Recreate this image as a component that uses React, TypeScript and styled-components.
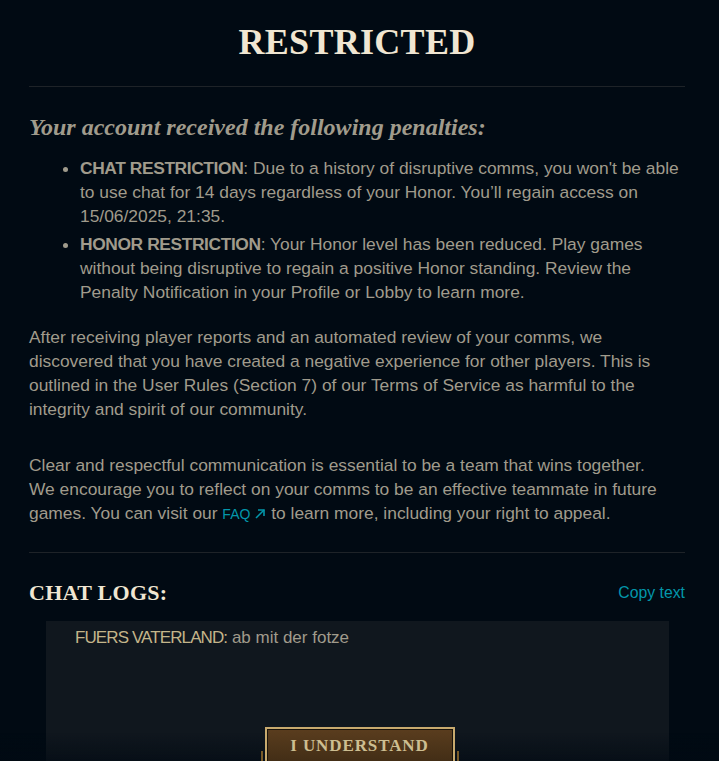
import React from 'react';
import styled, { createGlobalStyle } from 'styled-components';

const GlobalStyle = createGlobalStyle`
  html, body {
    margin: 0;
    padding: 0;
    background: #010a13;
  }
  body {
    font-family: 'Liberation Sans', Arial, sans-serif;
    color: #a09b8c;
  }
`;

const App: React.FC = () => {
  return (
    <>
      <GlobalStyle />
      <Page>
        <Title>RESTRICTED</Title>
        <Divider />
        <Subheading>Your account received the following penalties:</Subheading>
        <PenaltyList>
          <li>
            <Label>CHAT RESTRICTION</Label>: Due to a history of disruptive comms, you won't be able
            <br />
            to use chat for 14 days regardless of your Honor. You’ll regain access on
            <br />
            15/06/2025, 21:35.
          </li>
          <li>
            <Label>HONOR RESTRICTION</Label>: Your Honor level has been reduced. Play games
            <br />
            without being disruptive to regain a positive Honor standing. Review the
            <br />
            Penalty Notification in your Profile or Lobby to learn more.
          </li>
        </PenaltyList>
        <Paragraph>
          After receiving player reports and an automated review of your comms, we
          <br />
          discovered that you have created a negative experience for other players. This is
          <br />
          outlined in the User Rules (Section 7) of our Terms of Service as harmful to the
          <br />
          integrity and spirit of our community.
        </Paragraph>
        <Paragraph>
          Clear and respectful communication is essential to be a team that wins together.
          <br />
          We encourage you to reflect on your comms to be an effective teammate in future
          <br />
          games. You can visit our{' '}
          <FaqLink href="#">
            FAQ
            <svg width="12" height="12" viewBox="0 0 12 12" fill="none" stroke="currentColor" strokeWidth="1.6">
              <path d="M2 10 L10 2" />
              <path d="M4 2 H10 V8" />
            </svg>
          </FaqLink>{' '}
          to learn more, including your right to appeal.
        </Paragraph>
        <Divider />
        <LogsHeader>
          <LogsTitle>CHAT LOGS:</LogsTitle>
          <CopyButton>Copy text</CopyButton>
        </LogsHeader>
        <ChatBox>
          <ChatLine>
            <Sender>FUERS VATERLAND:</Sender> ab mit der fotze
          </ChatLine>
        </ChatBox>
      </Page>
      <Footer>
        <UnderstandButton>I UNDERSTAND</UnderstandButton>
      </Footer>
    </>
  );
};

const Page = styled.main`
  padding: 20px 34px 0 29px;
  font-size: 17.4px;
  line-height: 24px;
`;

const Title = styled.h1`
  margin: 0 0 22px;
  font-family: 'Liberation Serif', 'Times New Roman', serif;
  font-weight: bold;
  font-size: 36px;
  line-height: 44px;
  text-align: center;
  color: #f0e6d2;
  letter-spacing: 0.3px;
`;

const Divider = styled.hr`
  margin: 0;
  border: none;
  height: 1px;
  background: #1e2328;
`;

const Subheading = styled.h2`
  margin: 26px 0 15px;
  font-family: 'Liberation Serif', 'Times New Roman', serif;
  font-style: italic;
  font-weight: bold;
  font-size: 24px;
  line-height: 28px;
  color: #a09b8c;
`;

const PenaltyList = styled.ul`
  margin: 0 0 21px;
  padding-left: 51px;

  li {
    white-space: nowrap;
  }
  li + li {
    margin-top: 4px;
  }
`;

const Label = styled.strong`
  font-weight: bold;
  letter-spacing: -0.4px;
`;

const Paragraph = styled.p`
  margin: 0 0 32px;
  white-space: nowrap;

  &:last-of-type {
    margin-bottom: 26px;
  }
`;

const FaqLink = styled.a`
  color: #0397ab;
  text-decoration: none;
  font-size: 14px;

  svg {
    margin-left: 4px;
    vertical-align: -1px;
  }
`;

const LogsHeader = styled.div`
  display: flex;
  align-items: center;
  justify-content: space-between;
  margin-top: 26px;
`;

const LogsTitle = styled.h3`
  margin: 0;
  font-family: 'Liberation Serif', 'Times New Roman', serif;
  font-weight: bold;
  font-size: 22px;
  line-height: 28px;
  color: #f0e6d2;
  letter-spacing: 0.3px;
`;

const CopyButton = styled.button`
  background: transparent;
  border: none;
  padding: 0;
  color: #0397ab;
  font-family: 'Liberation Sans', Arial, sans-serif;
  font-size: 15.8px;
  cursor: pointer;
`;

const ChatBox = styled.div`
  margin: 14px 16px 0 17px;
  min-height: 220px;
  padding: 5px 29px;
  background: #10171e;
`;

const ChatLine = styled.div`
  color: #a09b8c;
  font-size: 17px;
`;

const Sender = styled.span`
  color: #c4b58a;
  letter-spacing: -0.9px;
`;

const Footer = styled.div`
  position: fixed;
  left: 0;
  right: 0;
  bottom: 0;
  height: 46px;
  padding-top: 12px;
  box-sizing: border-box;
  display: flex;
  justify-content: center;
  background: linear-gradient(to bottom, rgba(1, 10, 19, 0) 0%, rgba(1, 10, 19, 0) 40%, rgba(1, 10, 19, 0.6) 100%);
`;

const UnderstandButton = styled.button`
  position: relative;
  width: 190px;
  height: 44px;
  flex-shrink: 0;
  border: 2px solid #c8aa6e;
  box-shadow: inset 0 0 0 1px #1a140c;
  background: linear-gradient(to bottom, #5a3d1e, #3d2a14);
  color: #cdbe91;
  font-family: 'Liberation Serif', 'Times New Roman', serif;
  font-weight: bold;
  font-size: 17px;
  letter-spacing: 0.9px;
  padding: 0 0 6px;
  cursor: pointer;

  &::before,
  &::after {
    content: '';
    position: absolute;
    top: 22px;
    width: 2px;
    height: 20px;
    background: #785a28;
  }
  &::before {
    left: -6px;
  }
  &::after {
    right: -6px;
  }
`;

export default App;
